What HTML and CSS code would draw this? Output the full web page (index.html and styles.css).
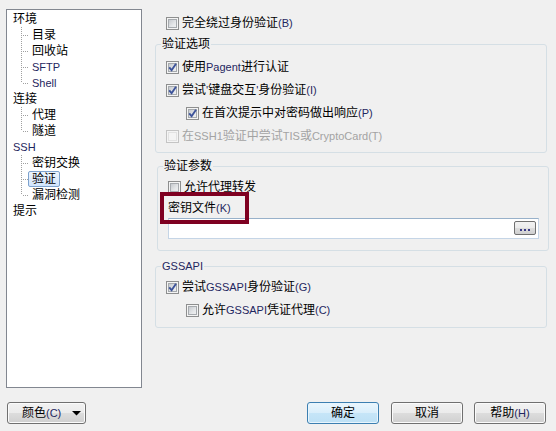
FILE: index.html
```html
<!DOCTYPE html>
<html lang="zh-CN">
<head>
<meta charset="utf-8">
<title>PuTTY 配置 - 验证</title>
<link rel="stylesheet" href="styles.css">
</head>
<body>
<div class="window">
  <div class="main">
    <div class="tree">
      <div class="node">
        <div class="item"><span class="lbl">环境</span></div>
        <ul class="kids">
          <li><span class="lbl">目录</span></li>
          <li><span class="lbl">回收站</span></li>
          <li><span class="lbl en">SFTP</span></li>
          <li><span class="lbl en">Shell</span></li>
        </ul>
      </div>
      <div class="node">
        <div class="item"><span class="lbl">连接</span></div>
        <ul class="kids">
          <li><span class="lbl">代理</span></li>
          <li><span class="lbl">隧道</span></li>
        </ul>
      </div>
      <div class="node">
        <div class="item"><span class="lbl en">SSH</span></div>
        <ul class="kids">
          <li><span class="lbl">密钥交换</span></li>
          <li><span class="lbl sel">验证</span></li>
          <li><span class="lbl">漏洞检测</span></li>
        </ul>
      </div>
      <div class="node">
        <div class="item"><span class="lbl">提示</span></div>
      </div>
    </div>

    <div class="panel">
      <div class="row toprow"><span class="cb"></span><span>完全绕过身份验证<span class="en">(B)</span></span></div>

      <fieldset class="grp g1">
        <legend>验证选项</legend>
        <div class="gbody">
          <div class="row"><span class="cb on"><svg viewBox="0 0 13 13" width="13" height="13"><path d="M3.2 6.4 L5.6 9.2 L10 2.8" fill="none" stroke="#3d539a" stroke-width="1.9"/></svg></span><span>使用<span class="en">Pagent</span>进行认证</span></div>
          <div class="row"><span class="cb on"><svg viewBox="0 0 13 13" width="13" height="13"><path d="M3.2 6.4 L5.6 9.2 L10 2.8" fill="none" stroke="#3d539a" stroke-width="1.9"/></svg></span><span>尝试<span class="en">'</span>键盘交互<span class="en">'</span>身份验证<span class="en">(I)</span></span></div>
          <div class="row sub"><span class="cb on"><svg viewBox="0 0 13 13" width="13" height="13"><path d="M3.2 6.4 L5.6 9.2 L10 2.8" fill="none" stroke="#3d539a" stroke-width="1.9"/></svg></span><span>在首次提示中对密码做出响应<span class="en">(P)</span></span></div>
          <div class="row dis"><span class="cb"></span><span>在<span class="en">SSH1</span>验证中尝试<span class="en">TIS</span>或<span class="en">CryptoCard(T)</span></span></div>
        </div>
      </fieldset>

      <fieldset class="grp g2">
        <legend>验证参数</legend>
        <div class="gbody">
          <div class="row"><span class="cb"></span><span>允许代理转发</span></div>
          <div class="keylabel">密钥文件<span class="en">(K)</span><span class="mark"></span></div>
          <div class="file">
            <span class="browse"><svg viewBox="0 0 20 12" width="20" height="12"><rect x="5" y="7" width="2" height="2" fill="#3a3a86"/><rect x="9" y="7" width="2" height="2" fill="#3a3a86"/><rect x="13" y="7" width="2" height="2" fill="#3a3a86"/></svg></span>
          </div>
        </div>
      </fieldset>

      <fieldset class="grp g3">
        <legend class="en">GSSAPI</legend>
        <div class="gbody">
          <div class="row"><span class="cb on"><svg viewBox="0 0 13 13" width="13" height="13"><path d="M3.2 6.4 L5.6 9.2 L10 2.8" fill="none" stroke="#3d539a" stroke-width="1.9"/></svg></span><span>尝试<span class="en">GSSAPI</span>身份验证<span class="en">(G)</span></span></div>
          <div class="row sub"><span class="cb"></span><span>允许<span class="en">GSSAPI</span>凭证代理<span class="en">(C)</span></span></div>
        </div>
      </fieldset>
    </div>
  </div>

  <div class="bar">
    <div class="btn color"><span>颜色<span class="en">(C)</span></span><svg class="arrow" viewBox="0 0 9 5" width="9" height="5"><polygon points="0,0 9,0 4.5,4.5" fill="#000"/></svg></div>
    <div class="spacer"></div>
    <div class="btn def">确定</div>
    <div class="btn b2">取消</div>
    <div class="btn b3">帮助<span class="en">(H)</span></div>
  </div>
</div>
</body>
</html>
```

FILE: styles.css
```css
html, body {
  margin: 0;
  padding: 0;
}
body {
  width: 556px;
  height: 431px;
  background: #f0f0f0;
  font-family: "Liberation Sans", "Noto Sans CJK SC", sans-serif;
  font-size: 12px;
  color: #000;
  overflow: hidden;
}
.en {
  font-family: "Liberation Sans", sans-serif;
  font-size: 11px;
  color: #1f2760;
}

.main {
  display: flex;
  padding: 9px 0 0 6px;
}

/* tree */
.tree {
  width: 136px;
  height: 379px;
  box-sizing: border-box;
  border: 1px solid #828790;
  background: #fff;
  padding: 1px 0 0 2px;
}
.item {
  height: 16px;
  display: flex;
  align-items: center;
}
.kids {
  list-style: none;
  margin: 0;
  padding: 0;
}
.kids li {
  position: relative;
  height: 16px;
  display: flex;
  align-items: center;
  padding-left: 19px;
}
.kids li::before {
  content: "";
  position: absolute;
  left: 12px;
  top: 0;
  bottom: 0;
  width: 1px;
  background: repeating-linear-gradient(to bottom, #a0a0a0 0 1px, transparent 1px 2px);
}
.kids li:last-child::before {
  bottom: 8px;
}
.kids li::after {
  content: "";
  position: absolute;
  left: 13px;
  top: 8px;
  width: 6px;
  height: 1px;
  background: repeating-linear-gradient(to right, transparent 0 1px, #a0a0a0 1px 2px);
}
.lbl {
  display: inline-block;
  height: 16px;
  box-sizing: border-box;
  border: 1px solid transparent;
  border-radius: 2px;
  padding: 0 3px;
  line-height: 14px;
  white-space: nowrap;
}
.lbl.sel {
  border-color: #7da2ce;
  background: linear-gradient(#eef5fe, #d2e5fc);
}

/* right panel */
.panel {
  margin-left: 13px;
  width: 394px;
  padding-top: 8px;
}
.row {
  display: flex;
  align-items: center;
  gap: 3px;
  height: 13px;
  line-height: 13px;
  white-space: nowrap;
}
.toprow {
  padding-left: 11px;
}
.cb {
  flex: none;
  width: 13px;
  height: 13px;
  box-sizing: border-box;
  border: 1px solid #8e8f8f;
  background: linear-gradient(135deg, #b9bdc2 0%, #e6e8ea 60%, #f4f4f4 100%);
  box-shadow: inset 0 0 0 1px #f4f4f4, inset 0 0 0 2px #a6aaae;
  position: relative;
}
.cb svg {
  position: absolute;
  left: -1px;
  top: -1px;
}
.gbody .row + .row {
  margin-top: 10px;
}
.row.sub {
  margin-left: 20px;
}
.row.dis,
.row.dis .en {
  color: #a3a3a3;
}
.row.dis .cb {
  border-color: #c4c4c4;
  background: #f4f4f4;
  box-shadow: inset 0 0 0 1px #f4f4f4, inset 0 0 0 2px #e2e2e2;
}

.grp {
  margin: 7px 0 0 0;
  padding: 0 0 9px 5px;
  min-width: 0;
  width: 392px;
  box-sizing: border-box;
  border: 1px solid #d5dfe5;
  border-radius: 3px;
}
.grp legend {
  padding: 0 1px;
  line-height: 14px;
  font-size: 12px;
}
.grp legend.en {
  color: #1f2760;
  font-size: 11px;
}
.gbody {
  padding: 10px 0 0 5px;
}
.g2 {
  margin-left: 2px;
  margin-top: 6px;
  padding-bottom: 11px;
}
.g2 .gbody {
  padding-top: 8px;
  padding-right: 9px;
}
.g3 {
  margin-top: 8px;
  padding-bottom: 10px;
}
.g3 .gbody {
  padding-top: 8px;
}

.keylabel {
  position: relative;
  margin-top: 7px;
  line-height: 14px;
  height: 14px;
  white-space: nowrap;
}
.mark {
  position: absolute;
  left: -8px;
  top: -9px;
  width: 89px;
  height: 32px;
  box-sizing: border-box;
  border: 4px solid #7e0021;
  z-index: 2;
}
.file {
  margin-top: 3px;
  height: 21px;
  box-sizing: border-box;
  background: #fff;
  border: 1px solid #c5d5e6;
  border-top-color: #98b1ca;
  display: flex;
  justify-content: flex-end;
  align-items: flex-start;
  padding: 2px 2px 0 0;
}
.browse {
  width: 22px;
  height: 14px;
  box-sizing: border-box;
  border: 1px solid #707070;
  border-radius: 2px;
  background: linear-gradient(#f2f2f2 0%, #ebebeb 50%, #dddddd 50%, #cfcfcf 100%);
  display: flex;
  align-items: flex-start;
  justify-content: center;
}

/* bottom bar */
.bar {
  display: flex;
  align-items: center;
  margin-top: 14px;
  padding: 0 10px 0 7px;
}
.spacer {
  flex: 1;
}
.btn {
  width: 72px;
  height: 22px;
  box-sizing: border-box;
  border: 1px solid #707070;
  border-radius: 3px;
  background: linear-gradient(#f2f2f2 0%, #ebebeb 50%, #dddddd 50%, #cfcfcf 100%);
  box-shadow: inset 0 0 0 1px #fbfbfb;
  display: flex;
  align-items: center;
  justify-content: center;
  line-height: 14px;
  white-space: nowrap;
}
.btn.color {
  width: 79px;
  justify-content: flex-start;
  padding: 0 4px 0 14px;
}
.btn.color .arrow {
  margin-left: auto;
}
.btn.def {
  border-color: #3c7fb1;
  background: linear-gradient(#eaf6fd 0%, #d9eefb 50%, #c6e5f8 50%, #bde0f5 100%);
  box-shadow: inset 0 0 0 1px #e8f5fd;
}
.btn.b2 {
  margin-left: 12px;
}
.btn.b3 {
  margin-left: 11px;
}
```
